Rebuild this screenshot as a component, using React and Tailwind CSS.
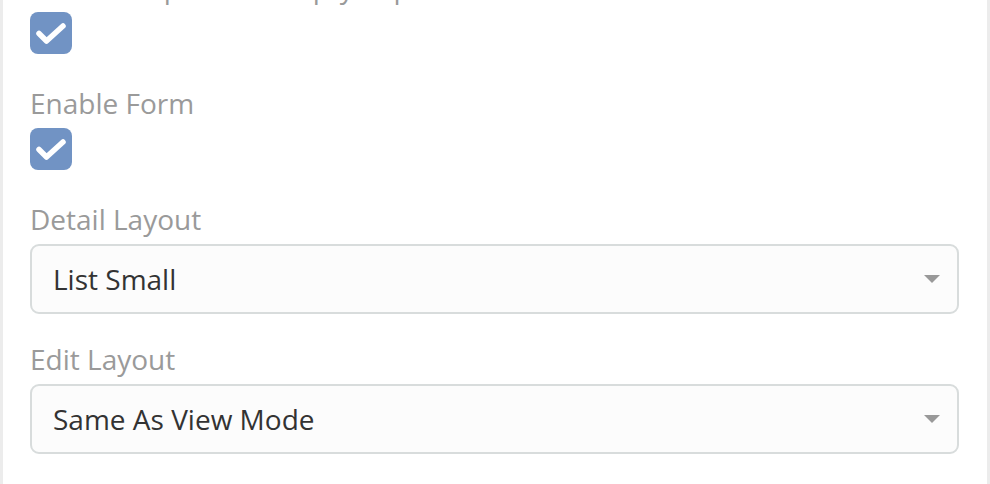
import React from "react";

const Checkbox = ({ checked = true }) => (
  <div className="flex h-[42px] w-[42px] items-center justify-center rounded-[8px] bg-[#7193c4]">
    {checked && (
      <svg width="42" height="42" viewBox="0 0 42 42" fill="none">
        <path d="M9 21.5 L16.5 29 L33 14" stroke="#fff" strokeWidth="5.5" strokeLinecap="round" strokeLinejoin="round" />
      </svg>
    )}
  </div>
);

const Select = ({ value }) => (
  <div className="flex h-[70px] w-full items-center justify-between rounded-[9px] border-2 border-[#d8dcdc] bg-[#fcfcfc] pl-[21px] pr-[17px]">
    <span className="text-[28px] text-[#333333]">{value}</span>
    <svg width="16" height="8" viewBox="0 0 16 8">
      <path d="M0 0 H16 L8 8 Z" fill="#999999" />
    </svg>
  </div>
);

const Field = ({ label, className = "", children }) => (
  <div className={`flex flex-col ${className}`}>
    <label className="mb-[5px] text-[28px] leading-[40px] text-[#9a9a9a]">{label}</label>
    {children}
  </div>
);

export default function App() {
  return (
    <div
      className="h-[484px] w-[990px] overflow-hidden border-x-[3px] border-x-[#ececec] bg-white pl-[27px] pr-[28px]"
      style={{ fontFamily: '"Open Sans", "Noto Sans", sans-serif' }}
    >
      <div className="-mt-[33px] flex flex-col">
        <Field label="Hide Group When Empty Top">
          <Checkbox />
        </Field>
        <Field label="Enable Form" className="mt-[29px]">
          <Checkbox />
        </Field>
        <Field label="Detail Layout" className="mt-[29px]">
          <Select value="List Small" />
        </Field>
        <Field label="Edit Layout" className="mt-[25px]">
          <Select value="Same As View Mode" />
        </Field>
      </div>
    </div>
  );
}
